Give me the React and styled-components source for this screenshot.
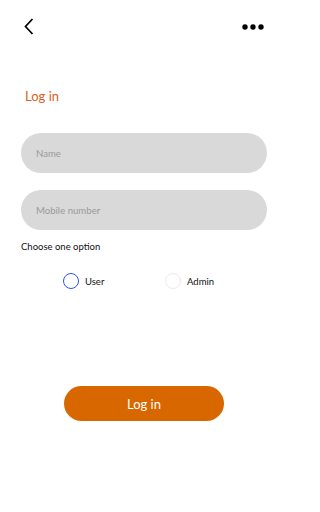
import React, { useState } from 'react';
import styled, { createGlobalStyle, css } from 'styled-components';

const Global = createGlobalStyle`
    html, body {
        margin: 0;
        background: #ffffff;
        font-family: Lato, "Open Sans", sans-serif;
    }
    * {
        box-sizing: border-box;
    }
`;

const Page = styled.div`
    display: flex;
    flex-direction: column;
    width: 288px;
    min-height: 512px;
    padding: 18px 21px 0;
`;

const Header = styled.div`
    display: flex;
    justify-content: space-between;
    align-items: center;
    height: 17px;
    padding: 0 3px;
`;

const IconButton = styled.button`
    display: flex;
    align-items: center;
    padding: 0;
    border: 0;
    background: none;
    cursor: pointer;
`;

const Title = styled.h1`
    margin: 53px 0 0;
    padding-left: 4px;
    font-size: 13px;
    line-height: 16px;
    font-weight: 400;
    color: #d9601c;
`;

const Field = styled.input`
    display: block;
    width: 100%;
    height: 40px;
    margin-top: ${props => props.gap}px;
    padding: 0 15px;
    border: 0;
    border-radius: 20px;
    background: #d9d9d9;
    font-family: inherit;
    font-size: 9.6px;
    color: #333;
    outline: none;

    &::placeholder {
        color: #999999;
    }
`;

const Hint = styled.p`
    margin: 11px 0 0;
    font-size: 9.5px;
    line-height: 12px;
    color: #111;
`;

const Options = styled.div`
    display: flex;
    margin-top: 20px;
    padding-left: 42px;
`;

const Option = styled.label`
    display: flex;
    align-items: center;
    gap: 6px;
    width: 102px;
    font-size: 9.5px;
    color: #111;
    cursor: pointer;
`;

const Circle = styled.span`
    display: block;
    width: 16px;
    height: 16px;
    border-radius: 50%;
    border: 1px solid #ececec;
    background: #fff;
    ${props =>
        props.checked &&
        css`
            border: 1.4px solid #2c55f5;
        `
    }
`;

const Submit = styled.button`
    align-self: center;
    width: 160px;
    height: 35px;
    margin-top: 97px;
    border: 0;
    border-radius: 18px;
    background: #d96700;
    color: #fff;
    font-family: inherit;
    font-size: 13px;
    cursor: pointer;
`;

const App = () => {
    const [role, setRole] = useState('user');

    return (
        <>
            <Global />
            <Page>
                <Header>
                    <IconButton aria-label="back">
                        <svg width="10" height="17" viewBox="0 0 10 17">
                            <path d="M8.5 1 L1.5 8.5 L8.5 16" fill="none" stroke="#000" strokeWidth="1.7" />
                        </svg>
                    </IconButton>
                    <IconButton aria-label="more">
                        <svg width="22" height="6" viewBox="0 0 22 6">
                            <circle cx="3" cy="3" r="2.7" fill="#000" />
                            <circle cx="11" cy="3" r="2.7" fill="#000" />
                            <circle cx="19" cy="3" r="2.7" fill="#000" />
                        </svg>
                    </IconButton>
                </Header>

                <Title>Log in</Title>

                <Field gap={29} placeholder="Name" />
                <Field gap={17} placeholder="Mobile number" />

                <Hint>Choose one option</Hint>

                <Options>
                    <Option onClick={() => setRole('user')}>
                        <Circle checked={role === 'user'} />
                        User
                    </Option>
                    <Option onClick={() => setRole('admin')}>
                        <Circle checked={role === 'admin'} />
                        Admin
                    </Option>
                </Options>

                <Submit>Log in</Submit>
            </Page>
        </>
    );
};

export default App;
